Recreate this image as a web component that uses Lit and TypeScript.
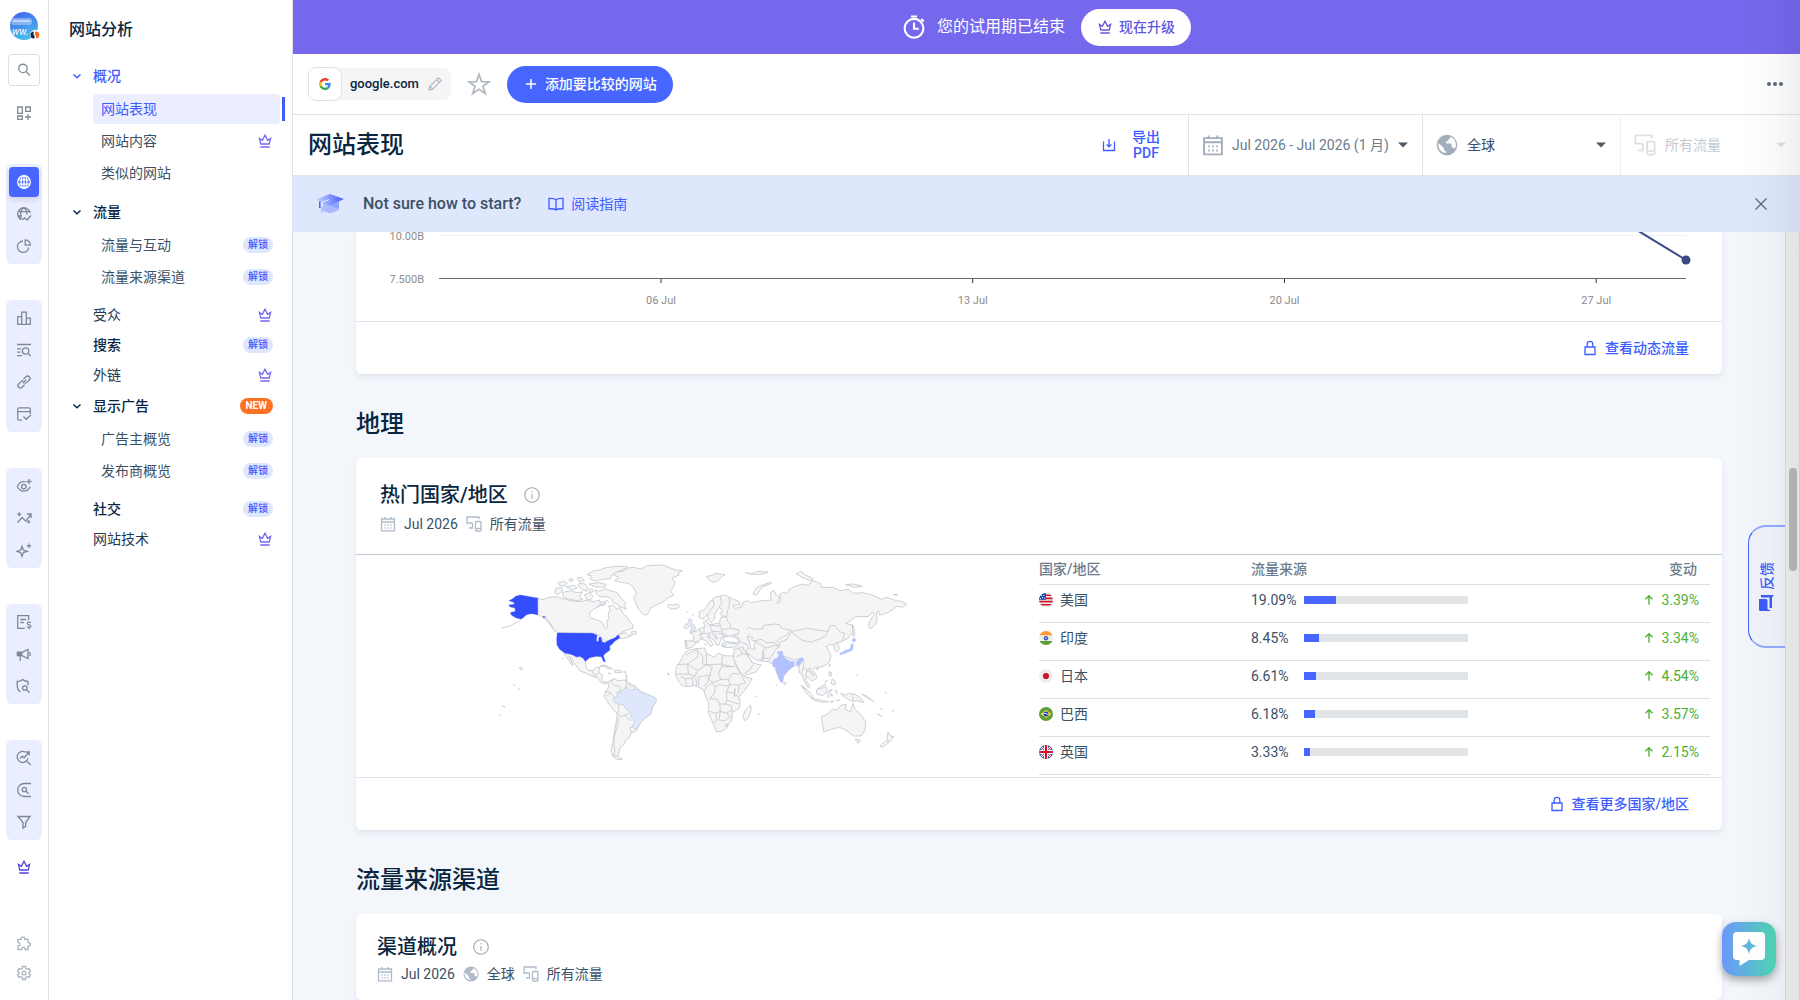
import { LitElement, html, css, svg, nothing } from "lit";
import { customElement, property } from "lit/decorators.js";
import { classMap } from "lit/directives/class-map.js";

const glyphs: Record<string, unknown> = {
  search: svg`<circle cx="6.8" cy="6.2" r="4.8"/><path d="M10.3 9.8 15 14.4"/>`,
  apps: svg`<path d="M1.7 2h4.6v6.3H1.7zM9.7 2h4.6v4.3H9.7zM1.7 11h4.6v3.3H1.7zM12 9v6M9 12h6"/>`,
  globeGrid: svg`<circle cx="8" cy="8" r="6.3"/><ellipse cx="8" cy="8" rx="3" ry="6.3"/><path d="M2 5.8h12M2 10.2h12M8 1.7v12.6"/>`,
  globeTrend: svg`<path d="M5 13.6A6.3 6.3 0 1 1 14.2 7M5 13.4C3.8 9 4.600 4 7.500 2M10.800 8.500C11 5.500 10 3.200 8 2M2 5.700h11.500M1.800 10H6M6 14l2.500-2.200L11 14l4-4.500"/>`,
  pie: svg`<path d="M7 3a5.700 5.700 0 1 0 5.800 6.500"/><path d="M9.200 1.800v5.400h5.200A5.400 5.400 0 0 0 9.200 1.800z"/>`,
  bars: svg`<path d="M1.700 6.700h4v7.600h-4zM5.700 2.200h4.600v12.100H5.700zM10.300 8.200h4v6.100h-4z"/>`,
  listSearch: svg`<path d="M1 2.500h14M1 6.800h4M1 10.200h3.500M1 13.600h5"/><circle cx="9.600" cy="9" r="3.200"/><path d="m12 11.400 2.700 2.600"/>`,
  link: svg`<path d="m6.800 9.200 3.400-3.400M7.400 5.300l2.600-2.600a2.300 2.300 0 0 1 3.300 3.300l-2.600 2.600a2.300 2.300 0 0 1-2 .6M8.600 10.700 6 13.300A2.300 2.300 0 0 1 2.700 10l2.600-2.600a2.300 2.300 0 0 1 2-.6"/>`,
  windowCheck: svg`<path d="M14.300 8V3.300c0-.9-.5-1.500-1.400-1.500H3.100c-.9 0-1.400.6-1.400 1.500v9.400c0 .9.500 1.500 1.400 1.500h3M1.700 5.600h12.600M7.500 10.500l2.700 2.800 4.600-4.300"/>`,
  eyePlus: svg`<path d="M9.500 3.900C5.500 3 2.600 5.700 1.300 8.500c1.300 2.700 3.800 4.700 6.500 4.700s5.200-1.800 6.500-4.500"/><circle cx="7.800" cy="8.600" r="2.300"/><path d="M13 1v5M10.500 3.500h5"/>`,
  trendSpark: svg`<path d="m1.500 12.500 4.700-5 3.600 3.600 5-6.600M11 4h4v4M3.300 2.300v4M1.300 4.300h4M12.600 10v3.600M10.800 11.800h3.600"/>`,
  sparkles: svg`<path d="M6 4.200 7.300 8l3.900 1.300-3.900 1.300L6 14.400l-1.300-3.800L.8 9.300 4.700 8zM13 1.500v4.600M10.700 3.800h4.600"/>`,
  invoice: svg`<path d="M12.700 6V1.700h-11v12.600h7M4.400 5.500h5.800M4.400 8.500h3.400M14.700 8.800c-.6-.9-3.400-.9-3.400.7 0 1.800 3.600.9 3.600 2.700 0 1.600-3 1.600-3.700.5M13 7.300v1M13 13.800v1.400"/>`,
  megaphone: svg`<path d="M1.500 6.400h4.300v3.200H1.500zM5.800 6.400 12 3.500v9L5.800 9.600M4.200 9.800V15M14 6v4" /><path d="M1.500 6.400h3.500v3H1.500z" fill="currentColor"/>`,
  shieldSearch: svg`<path d="M12 7.200V3.500C10 3.500 8 2.700 6.700 1.500 5.300 2.700 3 3.500 1.200 3.500v4.400c0 3 1.400 4.700 3 6.200"/><circle cx="8.800" cy="10" r="2.200"/><path d="m10.500 11.700 3 3"/>`,
  searchTrend: svg`<path d="M9.500 2.200A5.500 5.500 0 1 0 12 8.500M11 11.500l3.700 3.400M4 8.500l2.200-2.300 1.800 1.600 4.500-5M9.800 2h3.400v3.600"/>`,
  searchScope: svg`<path d="M15 1.500H8.200a6.500 6.500 0 0 0 0 13H15"/><circle cx="8.300" cy="7.500" r="2.200"/><path d="m10 9.200 2.600 2.600"/>`,
  funnel: svg`<path d="M2 2.500h12l-4.400 6v3.800L7 14V8.500z"/>`,
  crown: svg`<path d="M2.400 5.400 3.800 11h8.400l1.400-5.600-3 2L8 2.300 5.400 7.400zM3.300 14h9.400"/>`,
  puzzle: svg`<path d="M2 4.400h3.200c-.6-3.400 4.200-3.400 3.600 0H12v3.200c3.300-.5 3.300 4.200 0 3.700v3.200H9.200c.4-3-3.800-3-3.400 0H2v-3.600c2.800.3 2.800-3.500 0-3.200z"/>`,
  gear: svg`<circle cx="8" cy="8" r="1.900"/><path d="m6.600 1.500-.4 2-1.400.8-1.900-.7-1.400 2.500L3 7.400v1.300l-1.500 1.200 1.400 2.500 1.900-.7 1.400.8.4 2h2.800l.4-2 1.400-.8 1.900.7 1.400-2.500L13 8.700V7.400l1.500-1.300-1.400-2.500-1.900.7-1.400-.8-.4-2z"/>`,
  chevron: svg`<path d="m4.500 6.500 3.500 3.200 3.500-3.200"/>`,
  pencil: svg`<path d="m2 14 .8-3.600 8.600-8.600 2.800 2.800-8.600 8.600zM9.600 3.600l2.800 2.800M3.200 10.800l2 2"/>`,
  plus: svg`<path d="M8 3v10M3 8h10"/>`,
  star: svg`<path d="m8 1.700 1.700 4.700 5 .1-4 3.100 1.500 4.800L8 11.500l-4.200 2.900 1.500-4.800-4-3.100 5-.1z"/>`,
  download: svg`<path d="M2.500 4.500v9h11v-9M8 2v7.500M5.600 7.400 8 9.800l2.400-2.400"/>`,
  book: svg`<path d="M8 3.800C6.500 2.400 4 2.300 1 2.500v10.300c3-.2 5.500 0 7 1.200 1.500-1.200 4-1.400 7-1.200V2.500c-3-.2-5.500-.1-7 1.300zM8 3.800V14"/>`,
  close: svg`<path d="m2.500 2.500 11 11M13.500 2.500l-11 11"/>`,
  lock: svg`<path d="M3 7h10v7.500H3zM5.200 7V4.200a2.800 2.800 0 0 1 5.600 0V7"/>`,
  info: svg`<circle cx="8" cy="8" r="7.300"/><path d="M8 7v4.800M8 4.200v1.400"/>`,
  arrowUp: svg`<path d="M8 13.500V3.200M4 7.200l4-4 4 4"/>`,
  calendar: svg`<path d="M1.500 3h13v11.800h-13zM1.500 6h13M4.800 1v2M11.200 1v2"/><path d="M4.500 9h1.200M7.400 9h1.200M10.300 9h1.200M4.500 12h1.200M7.400 12h1.200M10.300 12h1.200"/>`,
  devices: svg`<path d="M13 3.200V1H1v6h5.500M6.500 7v4.500M3 12h4"/><rect x="9.500" y="5.500" width="5.500" height="9.500" rx="1"/><path d="M9.500 12.500H15"/>`,
  dots: svg`<g fill="currentColor" stroke="none"><circle cx="2" cy="8" r="2"/><circle cx="8" cy="8" r="2"/><circle cx="14" cy="8" r="2"/></g>`,
  caret: svg`<path d="M3 5.500h10L8 10.500z" fill="currentColor" stroke="none"/>`,
  stopwatch: svg`<circle cx="8" cy="8.900" r="6.300"/><path d="M8 5v4.200h3.200M6 1h4M12.800 2.600l1.700 1.700" />`,
  earth: svg`<circle cx="8" cy="8" r="7.500" fill="currentColor" stroke="none"/><path fill="#fff" stroke="none" d="M10.400 1.900c.2 1.300-.4 1.900-1.400 1.900v1.500H7.400v1.600h3.200c.6 0 .8.400.8.900v2.100h.8c.7 0 1.200.400 1.400 1 .600-.9.900-1.800.9-2.900 0-2.700-1.500-5-4.100-6.100zM7.200 13.900v-1.500c-.9 0-1.500-.6-1.500-1.500v-.8L1.800 6.500c-.8 3.600 1.700 7 5.400 7.400z"/>`,
};

/** Line icon drawn in the current text colour. */
@customElement("ui-icon")
class UiIcon extends LitElement {
  @property() name = "";
  @property({ type: Number }) size = 16;
  @property({ type: Number }) weight = 1.3;
  static styles = css`
    :host { display: inline-flex; flex: none; }
    .glyph { display: block; }
  `;
  render() {
    return html`<svg class="glyph" width=${this.size} height=${this.size} viewBox="0 0 16 16" fill="none"
      stroke="currentColor" stroke-width=${this.weight} aria-hidden="true">${glyphs[this.name]}</svg>`;
  }
}

const west = {
  land: [
    "M144,144 160,149 175,143 200,140 225,148 250,153 275,155 290,150 310,155 330,150 334,164 322,172 308,180 298,192 302,204 318,208 338,217 343,229 347,235 354,230 351,215 358,205 355,195 361,180 357,168 372,166 380,178 390,172 400,190 412,200 418,212 430,225 430,235 412,240 397,246 382,260 395,250 408,248 414,254 426,256 412,263 398,266 386,263 388,256 375,265 360,270 347,274 335,262 320,252 308,250 205,248 192,240 180,222 165,205 144,193Z",
    "M224,311 245,313 262,321 270,319 280,324 287,333 289,350 297,362 310,362 318,353 331,352 327,368 338,374 336,388 345,397 357,395 350,402 335,398 325,385 310,380 290,370 270,362 258,345 247,330 238,318 250,345 244,342 235,328Z",
    "M355,396 372,386 385,392 405,390 420,400 440,410 450,422 470,432 498,444 500,455 488,472 484,492 465,504 452,520 440,542 425,548 420,562 408,570 405,582 392,592 388,605 384,618 398,628 385,629 370,620 364,602 370,575 374,545 380,515 383,492 372,480 360,465 343,438 348,425 358,410Z",
    "M375,92 388,82 370,74 376,66 400,64 412,54 432,52 455,57 470,48 490,46 520,45 545,55 560,60 578,62 565,70 568,76 546,84 557,96 550,112 542,124 553,135 532,146 520,156 500,165 482,175 472,195 460,193 448,180 438,158 432,140 441,132 430,110 415,100 395,97Z",
    "M533,168 538,163 548,165 565,163 570,170 560,176 542,177Z",
    "M218,128 240,122 262,128 278,126 270,140 280,148 262,152 240,148 222,142Z",
    "M197,116 215,112 219,122 205,134 197,130Z",
    "M292,74 312,62 330,60 345,54 370,50 410,48 412,54 385,64 365,75 362,86 340,88 315,93 300,86 306,78Z",
    "M298,102 325,98 350,103 345,112 315,110Z",
    "M316,120 330,124 345,116 362,122 382,128 392,142 408,158 404,166 410,178 396,172 380,162 370,158 366,146 350,140 330,140 320,132Z",
    "M268,100 286,102 294,112 290,124 276,118 266,108Z",
    "M204,99 222,94 232,100 226,108 210,106Z",
    "M238,88 248,86 250,93 240,94Z", "M262,84 276,82 284,92 270,95Z", "M230,110 254,106 262,114 246,120Z",
    "M285,134 300,128 312,140 302,150 290,146Z", "M296,120 306,116 312,124 302,128Z", "M330,160 345,153 348,162 336,168Z",
    "M424,246 438,243 440,252 428,254Z",
    "M330,348 346,345 358,352 368,356 356,357 346,350Z", "M373,361 392,361 396,367 376,368Z",
    "M357,369 364,370 358,372Z", "M401,365 409,366 404,369Z",
    "M88,352 97,354 96,361 92,356Z", "M72,404 76,407Z", "M38,468 46,471Z", "M30,496 34,496Z", "M86,417 90,418Z",
    "M533,369 540,373 536,376Z", "M219,324 222,327Z", "M409,372 412,380 410,392Z",
    "M582,230 592,220 598,231 588,237Z", "M592,184 594,187Z", "M608,196 612,192Z",
  ],
  borders: [
    "M372,386 364,396 374,406 390,408 394,420 384,428M408,392 412,404 406,414M420,400 422,412M432,405 434,416M345,425 356,424 364,430 374,444M350,438 362,428M385,462 389,475 383,492M383,492 395,500 410,494 420,488M388,503 382,530 374,560 372,585 376,602 372,616 384,618M406,494 410,502 424,512M425,548 421,533 430,530 438,538M310,362 310,372 318,378M327,368 318,376 322,382M165,198 178,215 192,236",
  ],
  us: [
    "M68,147 78,139 92,135 120,140 144,144 144,195 133,192 122,191 110,194 101,204 94,207 80,204 66,196 62,188 77,184 76,174 60,170 58,165 76,162 70,156 58,152Z",
    "M203,249 308,250 322,256 320,272 326,276 328,262 334,262 338,276 345,278 360,270 375,264 386,254 390,264 375,274 368,282 360,288 361,300 345,312 341,318 347,334 343,336 335,320 320,319 300,323 287,334 280,324 270,319 262,321 245,313 225,309 210,298 202,285 201,265Z",
    "M160,199 167,201 162,204Z",
  ],
  brazil: "M370,446 382,438 381,428 393,426 403,416 412,412 420,421 445,416 452,428 475,434 498,444 500,455 488,472 484,492 465,504 452,520 438,540 428,529 435,515 424,503 422,488 408,475 400,464 385,462 375,458Z",
  uk: "M598,207 606,208 606,217 612,226 620,236 614,243 601,244 606,236 602,226 596,216Z",
};

const east = {
  land: [
    "M-45,272 -22,273 -17,262 -22,252 -30,248 -8,243 2,235 15,230 12,216 20,209 24,221 35,224 60,218 62,203 80,200 66,197 60,190 70,182 58,172 46,192 46,205 35,218 28,210 22,195 10,208 -2,202 0,185 16,178 28,158 45,142 75,135 90,142 118,155 122,164 100,166 105,175 125,172 130,156 145,152 152,158 185,152 215,150 212,128 222,120 230,135 240,142 232,160 244,152 240,132 252,128 262,130 270,116 290,108 310,102 325,106 338,92 362,100 365,112 400,112 420,122 445,118 462,130 490,128 520,136 545,148 560,142 590,152 606,154 622,163 608,172 590,168 582,178 560,190 540,195 536,182 530,192 533,206 528,222 512,237 506,225 512,210 526,190 520,187 505,200 468,200 452,212 438,220 460,226 458,248 445,265 425,275 412,278 419,295 412,307 406,302 402,285 392,283 380,290 390,305 394,320 388,338 370,350 350,352 338,358 350,376 350,386 336,393 326,384 320,378 318,390 331,410 325,412 312,390 306,372 298,368 298,350 290,345 280,350 265,362 252,378 248,397 240,390 230,365 225,350 215,340 205,335 180,332 165,328 150,315 135,303 158,338 170,342 185,345 170,365 135,377 125,372 110,345 100,325 104,300 98,292 74,293 65,282 80,278 110,282 120,276 116,262 98,256 92,262 82,256 66,262 62,274 58,285 50,285 45,272 30,262 22,258 32,272 42,284 32,290 20,272 5,268 -10,275 -20,290 -40,297Z",
    "M-33,300 -10,296 15,294 20,310 44,322 55,309 75,317 100,318 106,340 118,365 128,380 157,385 150,400 132,425 118,440 122,460 118,475 98,488 96,510 80,535 66,544 50,545 40,520 25,485 28,460 18,440 12,420 -2,412 -18,406 -35,410 -52,408 -64,394 -72,375 -70,350 -52,325 -48,312Z",
    "M152,465 155,478 145,505 135,512 130,500 136,482Z",
    "M365,500 385,492 398,477 412,480 425,465 440,464 437,478 452,486 460,460 466,478 482,492 498,515 496,540 484,558 462,558 448,548 438,540 420,532 395,538 372,545 368,520Z",
    "M466,567 482,570 475,580Z", "M565,546 572,558 582,560 570,576 562,568Z", "M560,572 568,577 550,592 541,588Z",
    "M304,405 320,418 340,438 338,446 322,432Z", "M335,444 352,448 372,452 386,455 370,457 345,452Z",
    "M350,420 366,408 376,403 382,414 378,430 368,437 352,432Z", "M384,424 398,418 390,428 400,438 392,436 386,442Z",
    "M423,430 436,436 446,430 466,433 484,445 492,458 474,452 458,454 445,448 432,440Z",
    "M388,365 396,368 394,380 390,378Z", "M398,386 408,396 404,406 394,400Z", "M382,390 376,400Z",
    "M388,342 392,344 389,350Z", "M350,356 356,355 354,360Z", "M252,396 260,400 254,404Z",
    "M458,224 464,238 465,256 460,258Z", "M160,132 172,112 212,96 215,100 185,112 172,135Z",
    "M20,80 44,74 46,70 76,74 62,84 55,92 40,97 28,90Z", "M138,68 155,72 175,64 205,66 190,72 165,74Z",
    "M290,72 305,64 315,74 340,86 338,92 320,88 305,80Z", "M438,104 462,102 488,109 465,112Z", "M582,134 592,132 594,136Z",
    "M392,454 402,454 396,458Z", "M410,452 420,450Z", "M408,420 412,432Z", "M485,432 500,438 524,456 514,450Z",
    "M533,492 546,498 540,496Z", "M578,484 584,480Z", "M543,474 547,479Z", "M470,378 474,374Z", "M556,428 560,429Z",
    "M228,404 232,406Z", "M168,438 172,440Z", "M176,492 180,492Z", "M106,416 104,440Z", "M14,281 20,285Z", "M66,288 78,288Z",
  ],
  borders: [
    /* Europe */
    "M62,140 66,160 58,172M88,142 90,160 82,190 80,200M28,158 40,150 44,165 30,185 22,196M80,200 84,215 92,222M60,218 62,228 30,226M92,222 92,234 118,240 116,252 98,256M62,228 66,238 92,236M-2,235 6,252 2,266M14,230 12,250 28,252 38,244 30,226M38,244 66,246 70,240M66,246 72,258M28,252 32,262M48,250 50,268M38,244 44,262 58,266M12,250 -5,256M-22,273 -2,278M-40,274 -38,292M58,252 80,252M2,266 12,262",
    /* Asia */
    "M120,276 140,282 148,296 135,303M104,300 118,294 130,290 132,302M104,292 118,282M118,294 128,312 152,315M110,320 128,312M135,370 150,360 160,345M143,262 150,276M140,240 148,232 165,238 190,236 192,226 225,222 240,224 248,236 275,240 262,255 245,262 228,278 200,278 185,268 165,272M165,272 180,282 200,294 190,302 194,320 180,332M200,294 228,285 240,290 228,282M190,302 188,335M228,298 212,325 190,325M205,335 212,328M228,298 240,290 238,278 262,268 275,246 285,242M285,242 310,238 320,234 350,240 385,244 378,258 352,270 335,276 310,272 290,258 276,246M385,244 390,228 405,226 420,245 435,250 430,266 425,275M250,318 285,330 300,326 312,328M312,330 312,350 322,360 335,352M298,350 300,330M312,350 306,368M322,360 318,378M322,362 332,366 342,380M328,356 344,376M402,285 412,278M140,310 160,340M150,250 142,262",
    /* Africa */
    "M-42,316 -8,298 -5,320 -36,342 -68,344M-36,342 -34,372 -68,372M-36,342 -6,362 20,344 20,312M-8,298 10,320 8,342 22,344M20,344 66,342 98,350M68,316 66,350 106,350M-34,372 -14,378 -6,362M20,344 38,352 30,376 -2,380 -4,376M66,350 56,370 64,388 38,398 26,386 34,374M-56,380 -42,386 -40,408M-42,386 -22,384 -14,378M-22,384 -20,406M-12,382 -8,408M-2,380 -4,408M30,376 24,398 12,408M38,398 18,412 16,424M38,398 46,410 60,404 78,408 92,404 86,388 64,388M86,388 98,370 118,372M92,404 118,405 138,398 128,384M46,410 44,430 30,446 52,448 60,462 78,462 82,450 80,426 90,404M118,405 116,430M80,426 98,428 116,440M82,450 98,456 118,462M60,462 62,484 48,490 28,484M78,462 94,466 98,486M62,484 80,490 96,480M48,490 52,512 42,518M62,484 58,510 76,512 90,500 82,488M96,500 92,505M76,524 84,522 80,530 74,526",
    /* Oceania and islands */
    "M352,418 376,412M460,432 460,454M320,418 310,412",
  ],
  caspian: "M145,262 158,260 156,270 168,278 162,286 166,298 154,296 150,280Z",
  india: [
    "M218,340 220,330 234,322 238,316 232,306 248,303 250,316 258,326 272,334 284,334 283,347 265,362 252,378 248,397 242,396 232,370 228,352 220,350Z",
    "M290,335 300,326 308,322 312,328 304,340 297,348 290,344Z",
  ],
  japan: [
    "M421,316 420,310 430,306 438,300 446,299 453,293 454,283 458,280 461,284 460,296 454,304 444,306 436,311 428,312Z",
    "M457,274 461,263 471,270 463,276Z",
  ],
};

/** Choropleth of traffic share per country. */
@customElement("world-map")
class WorldMap extends LitElement {
  static styles = css`
    :host { display: block; }
    .map { display: block; width: 100%; height: auto; }
    .land, .lines, .sea { stroke: #c3cad1; stroke-width: 2.6; stroke-linejoin: round; }
    .land { fill: #f5f5f5; }
    .lines { fill: none; }
    .sea { fill: #fff; }
    .top { fill: #334dff; stroke: #334dff; }
    .mid { fill: #b3c1ff; stroke: #b3c1ff; }
    .low { fill: #dfe7fd; stroke: #c3cad1; stroke-width: 2; }
  `;
  render() {
    const draw = (list: string[], cls: string) => list.map((d) => svg`<path class=${cls} d=${d}></path>`);
    return html`<svg class="map" viewBox="-5 15 1260 660" role="img" aria-label="热门国家/地区">
      ${draw(west.land, "land")} ${draw(west.borders, "lines")} ${draw(west.us, "top")}
      <path class="lines" d="M35,234 58,229 84,216 98,206 105,200M322,172 345,160 352,150 362,160"></path>
      <path class="low" d=${west.brazil}></path>
      <g transform="translate(630 0)">
        ${draw(east.land, "land")} ${draw(east.borders, "lines")}
        <path class="sea" d=${east.caspian}></path>
        <path class="sea" d="M70,262 90,258 104,262 118,270 112,278 84,276 72,272Z"></path>
        ${draw(east.india, "mid")} ${draw(east.japan, "mid")}
      </g>
      <path class="low" d=${west.uk}></path>
    </svg>`;
  }
}

const flagArt: Record<string, unknown> = {
  us: svg`<path fill="#eee" d="M0 0h14v14H0z"/><path fill="#d0142c" d="M0 1.400h14v1.600H0zM0 4.600h14v1.600H0zM0 7.800h14v1.600H0zM0 11h14v1.600H0z"/><path fill="#1a47b8" d="M0 0h7v6.800H0z"/><path fill="#fff" d="M2 2h1v1H2zM4.500 2h1v1h-1zM3 4h1v1H3zM5.200 4.600h1v1h-1zM1 5h1v1H1z"/>`,
  in: svg`<path fill="#eee" d="M0 0h14v14H0z"/><path fill="#ff9a2e" d="M0 0h14v4.300H0z"/><path fill="#5d9e38" d="M0 10h14v4H0z"/><circle cx="7" cy="7.200" r="2.300" fill="#4060c0"/><circle cx="7" cy="7.200" r=".9" fill="#9fb2e6"/>`,
  jp: svg`<path fill="#eee" d="M0 0h14v14H0z"/><circle cx="7" cy="7" r="3.100" fill="#d0142c"/>`,
  br: svg`<path fill="#5d9e38" d="M0 0h14v14H0z"/><path fill="#ffda44" d="M1.600 7 7 3l5.400 4L7 11z"/><circle cx="7" cy="7" r="2.500" fill="#1a47b8"/><path stroke="#fff" stroke-width=".9" fill="none" d="M4.800 6.500c1.600-.3 3.200.2 4.400 1.300"/>`,
  gb: svg`<path fill="#1a47a8" d="M0 0h14v14H0z"/><path stroke="#fff" stroke-width="2.400" d="m0 0 14 14M14 0 0 14"/><path stroke="#d0142c" stroke-width=".9" d="m0 0 14 14M14 0 0 14"/><path stroke="#fff" stroke-width="4.200" d="M7 0v14M0 7h14"/><path stroke="#d0142c" stroke-width="2.200" d="M7 0v14M0 7h14"/>`,
};

const countries = [
  { code: "us", name: "美国", share: 19.09, change: "3.39%" },
  { code: "in", name: "印度", share: 8.45, change: "3.34%" },
  { code: "jp", name: "日本", share: 6.61, change: "4.54%" },
  { code: "br", name: "巴西", share: 6.18, change: "3.57%" },
  { code: "gb", name: "英国", share: 3.33, change: "2.15%" },
];

type Mark = "crown" | "unlock" | "new";
interface NavRow { label: string; mark?: Mark; sub?: boolean; open?: boolean; active?: boolean; current?: boolean; gap?: boolean }

const navRows: NavRow[] = [
  { label: "概况", open: true, current: true },
  { label: "网站表现", sub: true, active: true },
  { label: "网站内容", sub: true, mark: "crown" },
  { label: "类似的网站", sub: true },
  { label: "流量", open: true, gap: true },
  { label: "流量与互动", sub: true, mark: "unlock" },
  { label: "流量来源渠道", sub: true, mark: "unlock" },
  { label: "受众", mark: "crown", gap: true },
  { label: "搜索", mark: "unlock" },
  { label: "外链", mark: "crown" },
  { label: "显示广告", open: true, mark: "new" },
  { label: "广告主概览", sub: true, mark: "unlock" },
  { label: "发布商概览", sub: true, mark: "unlock" },
  { label: "社交", mark: "unlock", gap: true },
  { label: "网站技术", mark: "crown" },
];

const railGroups = [
  [["globeGrid", "网站分析"], ["globeTrend", "网站趋势"], ["pie", "市场份额"]],
  [["bars", "排名"], ["listSearch", "关键词"], ["link", "外链"], ["windowCheck", "页面"]],
  [["eyePlus", "洞察"], ["trendSpark", "趋势"], ["sparkles", "助手"]],
  [["invoice", "广告支出"], ["megaphone", "广告"], ["shieldSearch", "审核"]],
  [["searchTrend", "需求"], ["searchScope", "范围"], ["funnel", "漏斗"]],
];

@customElement("app-root")
class AppRoot extends LitElement {
  static styles = css`
    :host {
      display: block;
      font: 400 14px/20px Roboto, "Noto Sans CJK SC", sans-serif;
      color: #3a5166;
    }
    * { box-sizing: border-box; }
    a { color: inherit; text-decoration: none; }
    button, select { font: inherit; color: inherit; border: 0; background: none; padding: 0; margin: 0; cursor: pointer; }
    h1, h2, h3, p { margin: 0; font-weight: 500; color: #092540; }
    .app { position: relative; display: grid; grid-template-columns: auto auto minmax(0, 1fr); height: 100vh; overflow: hidden; background: #fff; }

    .rail { display: flex; flex-direction: column; align-items: center; width: 49px; padding: 12px 0; border-right: 1px solid #dde3e9; color: #7c8896; }
    .avatar { display: block; height: 28px; margin-bottom: 14px; }
    .search { display: grid; place-items: center; width: 32px; height: 32px; margin-bottom: 12px; border: 1px solid #d9dee3; border-radius: 4px; }
    .tool { display: grid; place-items: center; width: 30px; height: 30px; border-radius: 4px; }
    .group { display: flex; flex-direction: column; gap: 2px; margin-top: 36px; padding: 3px; border-radius: 6px; background: #ebeeff; }
    .chosen { background: #4766ff; color: #fff; box-shadow: 0 3px 5px rgba(14, 30, 62, 0.12); }
    .upgrade { margin: 12px 0 auto; color: #5343d8; }
    .faint { color: #a9b3bd; }

    .side { display: flex; flex-direction: column; width: 244px; padding-top: 18px; border-right: 1px solid #dde3e9; }
    .side-title { margin: 0 20px 18px; font-size: 16px; line-height: 24px; }
    .row { display: flex; align-items: center; height: 30px; padding: 0 19px 0 44px; color: #092540; font-weight: 500; }
    .parent { gap: 8px; height: 31px; margin-bottom: 3px; padding-left: 20px; }
    .locked { color: #24394f; font-weight: 400; }
    .current { color: #3e5cff; }
    .gap { margin-top: 6px; }
    .sub { position: relative; margin: 0 12px 2px 44px; padding: 0 7px 0 8px; border-radius: 4px; color: #3a5166; font-weight: 400; }
    .active { background: #ebeeff; color: #3e5cff; }
    .active::after { content: ""; position: absolute; top: 3px; right: -5px; width: 3px; height: 24px; background: #3e5cff; }
    .mark { margin-left: auto; }
    .pill { height: 16px; padding: 0 5px; border-radius: 8px; background: #dfe7fd; color: #3e5cff; font: 500 10px/16px Roboto, "Noto Sans CJK SC", sans-serif; }
    .fresh { padding: 0 6px; background: #fc7123; color: #fff; font-weight: 700; }
    .royal { color: #7568ed; }

    .main { display: flex; flex-direction: column; min-width: 0; min-height: 0; }
    .trial { display: flex; align-items: center; justify-content: center; flex: none; height: 54px; background: #7568ed; color: #fff; font-size: 16px; }
    .trial-text { margin: 0 16px 0 11px; color: #fff; font-weight: 400; }
    .rounded { display: flex; align-items: center; gap: 6px; height: 37px; padding: 0 16px; border-radius: 19px; font-size: 14px; font-weight: 500; }
    .white { background: #fff; color: #6455e0; }
    .blue { background: #4766ff; color: #fff; }

    .sitebar { display: flex; align-items: center; gap: 16px; flex: none; height: 61px; padding: 0 17px 0 15px; border-bottom: 1px solid #e0e4e8; }
    .site { display: flex; align-items: center; gap: 8px; height: 32px; padding-right: 8px; border-radius: 8px; background: #f5f5f5; color: #092540; font-size: 13px; font-weight: 500; }
    .favicon { display: grid; place-items: center; width: 34px; height: 34px; border: 1px solid #dde3e9; border-radius: 8px; background: #fff; }
    .ghost { display: grid; color: #b1bac3; }
    .more { display: grid; margin-left: auto; color: #5b6b7a; }

    .titlebar { display: flex; align-items: stretch; flex: none; height: 61px; padding-left: 15px; border-bottom: 1px solid #e0e4e8; }
    .page-title { margin: auto auto auto 0; font-size: 24px; line-height: 32px; }
    .export { display: flex; align-items: center; gap: 15px; padding: 0 28px; color: #3e5cff; font-weight: 500; line-height: 16px; text-align: center; }
    .export-text { width: min-content; word-break: keep-all; }
    .filter { display: flex; align-items: center; gap: 9px; padding: 0 11px 0 13px; border-left: 1px solid #dde3e9; color: #6b7c8c; }
    .filter-icon { color: #a3adbb; }
    .select { flex: 1; appearance: none; min-width: 0; }
    .date { gap: 8px; width: 234px; }
    .date .select { margin-right: -8px; }
    .region { width: 198px; color: #3a5166; }
    .disabled { width: 180px; color: #c3cad1; border-color: #edf0f2; }
    .disabled .filter-icon { color: #dde1e7; }
    .disabled .select { color: #c3cad1; opacity: 1; }
    .caret { color: #4a5b6b; }
    .disabled .caret { color: #dde1e7; }

    .guide { display: flex; align-items: center; flex: none; height: 56px; padding: 0 31px 0 22px; background: #dfe7fd; }
    .guide-text { margin: 0 27px 0 18px; color: #3a5166; font-size: 16px; }
    .guide-link { display: flex; align-items: center; gap: 7px; color: #3e5cff; }
    .close { display: grid; margin-left: auto; color: #5b6b7a; }

    .viewport { display: flex; flex: 1; min-height: 0; background: #f3f7fc; }
    .content { flex: 1; min-width: 0; overflow: hidden; padding: 0 63px; }
    .track { flex: none; width: 15px; padding: 236px 2px 0 3px; border: 1px solid #dcdcdc; border-width: 0 1px; background: #f0f0f0; }
    .thumb { height: 103px; border-radius: 4px; background: #b9b9b9; }
    .card { border-radius: 6px; background: #fff; box-shadow: 0 3px 6px rgba(14, 30, 62, 0.08); }
    .flat { border-radius: 0 0 6px 6px; }
    .plot { padding: 0 36px 0 83px; }
    .chart { display: block; width: 100%; height: 89px; overflow: visible; font-size: 11px; fill: #8c8c8c; }
    .foot { display: flex; align-items: center; justify-content: flex-end; height: 53px; padding: 0 33px; border-top: 1px solid #e0e4e8; }
    .more-link { display: flex; align-items: center; gap: 7px; color: #3e5cff; font-weight: 500; }
    .section-title { padding: 33px 0 17px; font-size: 24px; line-height: 34px; }
    .card-head { padding: 23px 24px 20px; }
    .tight { padding: 19px 21px 16px; }
    .card-title { display: flex; align-items: center; gap: 16px; font-size: 20px; line-height: 28px; }
    .info { display: grid; color: #a6a6a6; }
    .meta { display: flex; align-items: center; gap: 8px; padding-top: 5px; }
    .tight .meta { padding-top: 3px; }
    .meta-icon { color: #b0bacb; }
    .geo { display: grid; grid-template-columns: minmax(0, 1fr) minmax(0, 1fr); border-top: 1px solid #c1c8d0; }
    .map { width: 420px; max-width: 100%; margin: 0 auto; }
    .table-box { padding: 0 12px 2px 0; }
    .table { width: 100%; border-collapse: collapse; table-layout: fixed; }
    .table th { height: 29px; padding: 0; border-bottom: 1px solid #dde1e5; color: #6b7c8c; font-weight: 500; text-align: left; }
    .table td { height: 38px; padding: 0 0 7px; border-bottom: 1px solid #dde1e5; }
    .col-name { width: 212px; }
    .col-change { width: 120px; }
    .cell { display: flex; align-items: center; }
    .country { gap: 7px; }
    .flag { display: block; border-radius: 50%; }
    .share { width: 53px; }
    .meter { flex: none; width: 164px; height: 8px; background: #e1e5e8; }
    .fill { height: 100%; background: #4766ff; }
    .rise { justify-content: flex-end; gap: 5px; padding-right: 11px; color: #4fae33; }
    .table .right { padding-right: 13px; text-align: right; }

    .shade { position: absolute; inset: 0 0 0 auto; width: 64px; pointer-events: none; background: linear-gradient(90deg, rgba(0, 0, 0, 0), rgba(0, 0, 0, 0.02) 55%, rgba(0, 0, 0, 0.06)); }
    .feedback { position: absolute; top: 525px; right: 15px; display: flex; align-items: center; justify-content: center; gap: 5px; width: 37px; height: 123px;
      border: 2px solid #94aaff; border-right: 1px solid #4766ff; border-left: 0; border-radius: 0 18px 18px 0; background: #f0f4fa; color: #3e5cff; font-weight: 500;
      writing-mode: vertical-rl; text-orientation: sideways; transform: rotate(180deg); }
    .chat { position: absolute; right: 24px; bottom: 24px; display: grid; place-items: center; width: 54px; height: 54px; border-radius: 14px;
      background: linear-gradient(90deg, #6b97fb, #4fd8b3); box-shadow: 0 4px 8px rgba(0, 0, 0, 0.35); }
  `;

  private icon(name: string, size = 16, weight = 1.3, cls = "") {
    return html`<ui-icon class=${cls} name=${name} size=${size} weight=${weight}></ui-icon>`;
  }

  private mark(mark?: Mark) {
    if (mark === "crown") return this.icon("crown", 16, 1.3, "mark royal");
    if (mark === "unlock") return html`<span class="mark pill">解锁</span>`;
    if (mark === "new") return html`<span class="mark pill fresh">NEW</span>`;
    return nothing;
  }

  private navRow(r: NavRow) {
    const cls = classMap({
      row: true, parent: !!r.open, sub: !!r.sub, active: !!r.active, current: !!r.current,
      gap: !!r.gap, locked: !r.sub && r.mark === "crown",
    });
    return html`<a href="#" class=${cls}>${r.open ? this.icon("chevron", 16, 1.5) : nothing}<span>${r.label}</span>${this.mark(r.mark)}</a>`;
  }

  private rail() {
    return html`<nav class="rail" aria-label="产品">
      <a href="#" class="avatar" aria-label="主页">
        <svg width="32" height="30" viewBox="-2 0 32 30">
          <defs><linearGradient id="sky" x1="0" y1="0" x2="0.4" y2="1"><stop offset="0" stop-color="#3f5ff0"/><stop offset="1" stop-color="#49b9ea"/></linearGradient>
          <clipPath id="disc"><circle cx="14" cy="14" r="14"/></clipPath></defs>
          <g clip-path="url(#disc)"><rect width="28" height="28" fill="url(#sky)"/>
          <rect x="1" y="6" width="21" height="7" rx="3" fill="#fff" opacity=".35"/><rect x="3" y="8" width="17" height="2" fill="#fff" opacity=".5"/>
          <text x="2" y="23" font-family="Roboto, sans-serif" font-size="10" font-style="italic" fill="#fff">ww.</text></g>
          <circle cx="25" cy="23" r="5" fill="#fff"/><path d="M24 19.500a3.500 3.500 0 0 0 0 7c1.500-1 .3-2.500-.2-3.500s-.5-2.500.2-3.500z" fill="#092540"/><path d="M25.500 19.500a3.500 3.500 0 0 1 .5 7c.8-2-.5-2.700-1-4-.3-1-.2-2.200.5-3z" fill="#fc6a21"/>
        </svg>
      </a>
      <button class="search" aria-label="搜索">${this.icon("search", 14, 1.5)}</button>
      <button class="tool" aria-label="应用">${this.icon("apps")}</button>
      ${railGroups.map((g, i) => html`<div class="group">${g.map(([n, label], j) =>
        html`<a href="#" class=${classMap({ tool: true, chosen: i === 0 && j === 0 })} aria-label=${label}>${this.icon(n)}</a>`)}</div>`)}
      <a href="#" class="tool upgrade" aria-label="升级">${this.icon("crown")}</a>
      <a href="#" class="tool faint" aria-label="扩展">${this.icon("puzzle")}</a>
      <a href="#" class="tool faint" aria-label="设置">${this.icon("gear")}</a>
    </nav>`;
  }

  private header() {
    return html`
      <div class="trial">
        ${this.icon("stopwatch", 24, 1.4)}<p class="trial-text">您的试用期已结束</p>
        <button class="rounded white">${this.icon("crown")}现在升级</button>
      </div>
      <div class="sitebar">
        <div class="site">
          <span class="favicon"><svg width="12" height="12" viewBox="0 0 48 48"><path fill="#4285F4" d="M46.500 24.500c0-1.600-.1-3.100-.4-4.500H24v9h12.700c-.6 3-2.200 5.400-4.700 7.100l7.500 5.800c4.400-4.100 7-10.100 7-17.400z"/><path fill="#34A853" d="M24 48c6.500 0 11.900-2.100 15.500-5.900L32 36.300c-2 1.400-4.700 2.300-8 2.300-6.200 0-11.500-4.200-13.400-9.800l-7.900 6.100C6.700 42.600 14.700 48 24 48z"/><path fill="#FBBC05" d="M10.600 28.600a14.400 14.400 0 0 1 0-9.200l-7.900-6.200a24 24 0 0 0 0 21.600z"/><path fill="#EA4335" d="M24 9.500c3.500 0 6.700 1.200 9.200 3.600l6.900-6.900C35.900 2.400 30.500 0 24 0 14.700 0 6.700 5.400 2.700 13.200l7.900 6.200C12.500 13.700 17.800 9.500 24 9.500z"/></svg></span>
          <span>google.com</span>
          <button class="ghost" aria-label="编辑">${this.icon("pencil")}</button>
        </div>
        <button class="ghost" aria-label="收藏">${this.icon("star", 24, 1.2)}</button>
        <button class="rounded blue">${this.icon("plus", 16, 1.5)}添加要比较的网站</button>
        <button class="more" aria-label="更多">${this.icon("dots")}</button>
      </div>
      <div class="titlebar">
        <h1 class="page-title">网站表现</h1>
        <button class="export">${this.icon("download")}<span class="export-text">导出 PDF</span></button>
        <label class="filter date">${this.icon("calendar", 22, 1.4, "filter-icon")}
          <select class="select" aria-label="日期"><option>Jul 2026 - Jul 2026 (1 月)</option></select>${this.icon("caret", 16, 1, "caret")}</label>
        <label class="filter region">${this.icon("earth", 22, 1, "filter-icon")}
          <select class="select" aria-label="国家/地区"><option>全球</option></select>${this.icon("caret", 16, 1, "caret")}</label>
        <label class="filter disabled">${this.icon("devices", 22, 1.3, "filter-icon")}
          <select class="select" aria-label="流量" disabled><option>所有流量</option></select>${this.icon("caret", 16, 1, "caret")}</label>
      </div>
      <div class="guide">
        <svg width="30" height="24" viewBox="0 0 30 24" aria-hidden="true"><defs><linearGradient id="cap" x1="0" x2="1" y1="0.3" y2="0.2"><stop offset="0" stop-color="#c4d0ff"/><stop offset="1" stop-color="#3d5cff"/></linearGradient></defs>
          <path fill="#8fa5ff" d="M8 9v9c5 4 12 3 16-1V8z"/><path fill="#a9baff" d="M8 11v7c5 4 12 3 16-1z"/><path fill="url(#cap)" d="M1 7.500 15 2l14 5-15 7z"/><path fill="none" stroke="#e9eeff" d="m14 7.500-8 3"/><path fill="none" stroke="#4766ff" stroke-width="1.600" d="M4.800 9.500V16"/><path stroke="#a9baff" stroke-width="1.500" d="M7 15v6"/></svg>
        <p class="guide-text">Not sure how to start?</p>
        <a href="#" class="guide-link">${this.icon("book")}阅读指南</a>
        <button class="close" aria-label="关闭">${this.icon("close")}</button>
      </div>`;
  }

  private chart() {
    const ticks: [string, string][] = [["17.8%", "06 Jul"], ["42.8%", "13 Jul"], ["67.8%", "20 Jul"], ["92.8%", "27 Jul"]];
    return html`<section class="card flat">
      <div class="plot"><svg class="chart" role="img" aria-label="流量">
        <line x1="0" x2="100%" y1="3.500" y2="3.500" stroke="#f0f2f4"/>
        <line x1="0" x2="100%" y1="46.500" y2="46.500" stroke="#6a6a6a"/>
        <text x="-15" y="8" text-anchor="end">10.00B</text><text x="-15" y="51" text-anchor="end">7.500B</text>
        ${ticks.map(([x, t]) => svg`<line x1=${x} x2=${x} y1="47" y2="51" stroke="#333"/><text x=${x} y="72" text-anchor="middle">${t}</text>`)}
        <line x1="95%" x2="100%" y1="-10" y2="28" stroke="#3b4a86" stroke-width="2"/>
        <circle cx="100%" cy="28" r="4.500" fill="#3b4a86"/>
      </svg></div>
      <div class="foot"><a href="#" class="more-link">${this.icon("lock")}查看动态流量</a></div>
    </section>`;
  }

  private geography() {
    return html`<h2 class="section-title">地理</h2>
    <section class="card">
      <div class="card-head">
        <h3 class="card-title">热门国家/地区<button class="info" aria-label="说明">${this.icon("info", 16, 1.1)}</button></h3>
        <div class="meta">${this.icon("calendar", 16, 1.3, "meta-icon")}<span>Jul 2026</span>${this.icon("devices", 16, 1.3, "meta-icon")}<span>所有流量</span></div>
      </div>
      <div class="geo">
        <div class="map"><world-map></world-map></div>
        <div class="table-box"><table class="table">
          <thead><tr><th class="col-name">国家/地区</th><th>流量来源</th><th class="col-change right">变动</th></tr></thead>
          <tbody>${countries.map((c) => html`<tr>
            <td><div class="cell country"><svg class="flag" width="14" height="14" viewBox="0 0 14 14">${flagArt[c.code]}</svg><a href="#">${c.name}</a></div></td>
            <td><div class="cell"><span class="share">${c.share}%</span><div class="meter"><div class="fill" style="width:calc(${c.share}% + 1px)"></div></div></div></td>
            <td><div class="cell rise">${this.icon("arrowUp", 14, 1.5)}<span>${c.change}</span></div></td>
          </tr>`)}</tbody>
        </table></div>
      </div>
      <div class="foot"><a href="#" class="more-link">${this.icon("lock")}查看更多国家/地区</a></div>
    </section>`;
  }

  private channels() {
    return html`<h2 class="section-title">流量来源渠道</h2>
    <section class="card">
      <div class="card-head tight">
        <h3 class="card-title">渠道概况<button class="info" aria-label="说明">${this.icon("info", 16, 1.1)}</button></h3>
        <div class="meta">${this.icon("calendar", 16, 1.3, "meta-icon")}<span>Jul 2026</span>${this.icon("earth", 16, 1, "meta-icon")}<span>全球</span>${this.icon("devices", 16, 1.3, "meta-icon")}<span>所有流量</span></div>
      </div>
    </section>`;
  }

  render() {
    return html`<div class="app">
      ${this.rail()}
      <nav class="side" aria-label="网站分析"><h2 class="side-title">网站分析</h2>${navRows.map((r) => this.navRow(r))}</nav>
      <main class="main">
        ${this.header()}
        <div class="viewport">
          <div class="content">${this.chart()}${this.geography()}${this.channels()}</div>
          <div class="track"><div class="thumb"></div></div>
        </div>
      </main>
      <button class="feedback">
        <svg width="16" height="16" viewBox="0 0 16 16" fill="currentColor" aria-hidden="true"><path d="M4 0h10.500A1.500 1.500 0 0 1 16 1.500V12H9a1.500 1.500 0 0 1-1.500-1.500V2z"/><path d="M1 16 3 13.500V3h2.500v10.500H14V16z"/></svg>
        反馈</button>
      <button class="chat" aria-label="聊天"><svg width="32" height="34" viewBox="0 0 32 34"><defs><linearGradient id="spark"><stop offset="0" stop-color="#62a9e8"/><stop offset="1" stop-color="#5cc3cb"/></linearGradient></defs>
        <path fill="#fff" d="M4 0h24a4 4 0 0 1 4 4v20a4 4 0 0 1-4 4H16l-9.500 6v-6H4a4 4 0 0 1-4-4V4a4 4 0 0 1 4-4z"/><path fill="url(#spark)" d="M16 6c1 5 3 7 8 8-5 1-7 3-8 8-1-5-3-7-8-8 5-1 7-3 8-8z"/></svg></button>
      <div class="shade"></div>
    </div>`;
  }
}
